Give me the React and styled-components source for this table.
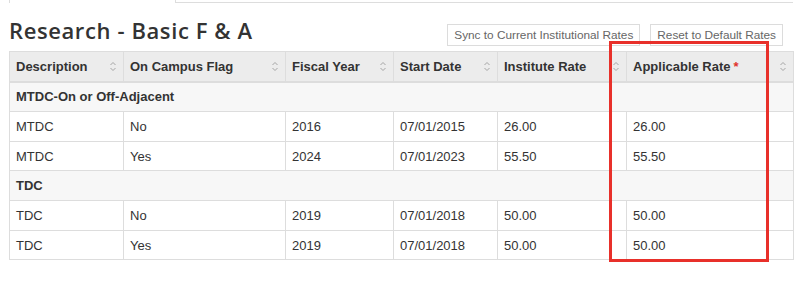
import styled, { createGlobalStyle } from 'styled-components';
import { Fragment } from 'react';

const GlobalStyle = createGlobalStyle`
  body {
    margin: 0;
    background: #fff;
    font-family: 'Liberation Sans', Arial, sans-serif;
    color: #333;
  }
`;

const Page = styled.div`
  position: relative;
  width: 804px;
  height: 295px;
  padding: 0 11px 0 9px;
  box-sizing: border-box;
  overflow: hidden;
`;

const TabStrip = styled.div`
  display: flex;
  height: 3px;
`;

const Tab = styled.div`
  width: 165px;
  border-left: 1px solid #ddd;
  border-right: 1px solid #ddd;
`;

const TabFiller = styled.div`
  flex: 1;
  border-bottom: 1px solid #ddd;
`;

const TitleBar = styled.div`
  display: flex;
  align-items: flex-end;
  justify-content: space-between;
  height: 48px;
`;

const Title = styled.h2`
  margin: 0 0 7px 0;
  font-family: 'Open Sans', Lato, sans-serif;
  font-size: 22px;
  line-height: 28px;
  font-weight: 600;
  letter-spacing: 0.6px;
  color: #333;
`;

const Actions = styled.div`
  display: flex;
  gap: 10px;
  margin-right: 10px;
  margin-bottom: 5px;
`;

const ActionButton = styled.button`
  height: 22px;
  padding: 0 6px;
  border: 1px solid #dcdcdc;
  background: #fff;
  color: #666;
  font-family: 'Liberation Sans', Arial, sans-serif;
  font-size: 11.8px;
  cursor: pointer;
`;

const Table = styled.table`
  width: 784px;
  border-collapse: collapse;
  table-layout: fixed;
  font-size: 13px;
  border: 1px solid #ddd;
`;

const Row = styled.tr`
  height: ${(p) => p.$h}px;
`;

const HeadCell = styled.th`
  padding: 0 6px;
  background: #ececec;
  border: 1px solid #ddd;
  border-bottom: 2px solid #ddd;
  text-align: left;
  font-weight: bold;
  color: #333;
`;

const HeadInner = styled.div`
  display: flex;
  align-items: center;
  justify-content: space-between;
`;

const Required = styled.span`
  color: #e0322b;
  margin-left: 3px;
`;

const GroupCell = styled.td`
  padding: 0 6px;
  background: #f7f7f7;
  border: 1px solid #ddd;
  font-weight: bold;
`;

const Cell = styled.td`
  padding: 0 6px;
  border: 1px solid #ddd;
  color: #333;
  white-space: nowrap;
`;

const Highlight = styled.div`
  position: absolute;
  left: 609px;
  top: 41px;
  width: 160px;
  height: 221px;
  box-sizing: border-box;
  border: 3px solid #e8302a;
  pointer-events: none;
`;

function SortIcon() {
  return (
    <svg width="8" height="11" viewBox="0 0 8 11" fill="none" stroke="#a5a5a5" strokeWidth="1">
      <path d="M1.5 4 L4 1.5 L6.5 4" />
      <path d="M1.5 7 L4 9.5 L6.5 7" />
    </svg>
  );
}

const columns = [
  { label: 'Description', w: 114 },
  { label: 'On Campus Flag', w: 162 },
  { label: 'Fiscal Year', w: 108 },
  { label: 'Start Date', w: 104 },
  { label: 'Institute Rate', w: 129 },
  { label: 'Applicable Rate', w: 167, required: true },
];

const groups = [
  {
    name: 'MTDC-On or Off-Adjacent',
    rows: [
      ['MTDC', 'No', '2016', '07/01/2015', '26.00', '26.00'],
      ['MTDC', 'Yes', '2024', '07/01/2023', '55.50', '55.50'],
    ],
  },
  {
    name: 'TDC',
    rows: [
      ['TDC', 'No', '2019', '07/01/2018', '50.00', '50.00'],
      ['TDC', 'Yes', '2019', '07/01/2018', '50.00', '50.00'],
    ],
  },
];

export default function App() {
  return (
    <>
      <GlobalStyle />
      <Page>
        <TabStrip>
          <Tab />
          <TabFiller />
        </TabStrip>
        <TitleBar>
          <Title>Research - Basic F &amp; A</Title>
          <Actions>
            <ActionButton>Sync to Current Institutional Rates</ActionButton>
            <ActionButton>Reset to Default Rates</ActionButton>
          </Actions>
        </TitleBar>
        <Table>
          <colgroup>
            {columns.map((c) => (
              <col key={c.label} style={{ width: c.w }} />
            ))}
          </colgroup>
          <thead>
            <Row $h={30}>
              {columns.map((c) => (
                <HeadCell key={c.label}>
                  <HeadInner>
                    <span>
                      {c.label}
                      {c.required && <Required>*</Required>}
                    </span>
                    <SortIcon />
                  </HeadInner>
                </HeadCell>
              ))}
            </Row>
          </thead>
          <tbody>
            {groups.map((g) => (
              <Fragment key={g.name}>
                <Row $h={30}>
                  <GroupCell colSpan={6}>{g.name}</GroupCell>
                </Row>
                {g.rows.map((r, i) => (
                  <Row key={i} $h={i === 0 ? 30 : 29}>
                    {r.map((v, j) => (
                      <Cell key={j}>{v}</Cell>
                    ))}
                  </Row>
                ))}
              </Fragment>
            ))}
          </tbody>
        </Table>
        <Highlight />
      </Page>
    </>
  );
}
